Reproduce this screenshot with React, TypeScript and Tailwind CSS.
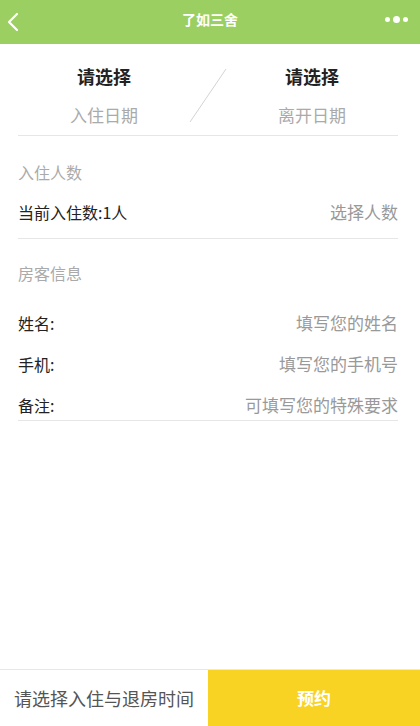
import * as React from 'react';

const FONT = '"Noto Sans CJK SC", "Noto Sans", sans-serif';

function InfoRow({ label, placeholder }: { label: string; placeholder: string }) {
  return (
    <div className="flex items-center justify-between h-[24px] leading-[24px]">
      <span className="text-[16px] text-[#222]">{label}</span>
      <span className="text-[17px] text-[#999]">{placeholder}</span>
    </div>
  );
}

export default function App() {
  return (
    <div className="h-[726px] w-[420px] flex flex-col bg-white" style={{ fontFamily: FONT }}>
      {/* nav bar */}
      <div className="relative h-[44px] bg-[#9ccf61] flex items-center justify-center">
        <svg className="absolute left-[6px] top-[12px]" width="14" height="20" viewBox="0 0 14 20">
          <path d="M11 2 L3 10 L11 18" fill="none" stroke="#fff" strokeWidth="2.2" strokeLinecap="round" strokeLinejoin="round" />
        </svg>
        <span className="-mt-[6px] text-[14px] font-bold text-white leading-[20px]">了如三舍</span>
        <div className="absolute right-[12px] top-[16px] flex items-center gap-[3px]">
          <span className="block w-[5px] h-[5px] rounded-full bg-white" />
          <span className="block w-[7px] h-[7px] rounded-full bg-white" />
          <span className="block w-[5px] h-[5px] rounded-full bg-white" />
        </div>
      </div>

      {/* dates */}
      <div className="relative grid grid-cols-2 w-[416px] pt-[20px] pb-[8px]">
        <div className="flex flex-col items-center">
          <span className="text-[18px] font-bold text-[#222] leading-[24px]">请选择</span>
          <span className="mt-[15px] text-[17px] text-[#aaa] leading-[24px]">入住日期</span>
        </div>
        <div className="flex flex-col items-center">
          <span className="text-[18px] font-bold text-[#222] leading-[24px]">请选择</span>
          <span className="mt-[15px] text-[17px] text-[#aaa] leading-[24px]">离开日期</span>
        </div>
        <svg className="absolute left-[188px] top-[24px]" width="40" height="56" viewBox="0 0 40 56">
          <line x1="38" y1="1" x2="2" y2="54" stroke="#d4d4d4" strokeWidth="1" />
        </svg>
      </div>

      <div className="ml-[18px] mr-[22px] border-t border-[#e6e6e6]">
        <div className="pt-[24px] pb-[14px] border-b border-[#e6e6e6]">
          <div className="text-[16px] leading-[24px] text-[#aaa]">入住人数</div>
          <div className="mt-[16px]">
            <InfoRow label="当前入住数:1人" placeholder="选择人数" />
          </div>
        </div>

        <div className="pt-[22px] pb-[3px] border-b border-[#e6e6e6]">
          <div className="text-[16px] leading-[24px] text-[#aaa]">房客信息</div>
          <div className="mt-[26px] flex flex-col gap-[17px]">
            <InfoRow label="姓名:" placeholder="填写您的姓名" />
            <InfoRow label="手机:" placeholder="填写您的手机号" />
            <InfoRow label="备注:" placeholder="可填写您的特殊要求" />
          </div>
        </div>
      </div>

      {/* bottom bar */}
      <div className="mt-auto border-t border-[#e8e8e8] h-[57px] flex">
        <div className="w-[208px] flex items-center justify-center text-[18px] text-[#555]">
          请选择入住与退房时间
        </div>
        <div className="flex-1 bg-[#f9d324] flex items-center justify-center text-[17px] font-bold text-white">
          预约
        </div>
      </div>
    </div>
  );
}
